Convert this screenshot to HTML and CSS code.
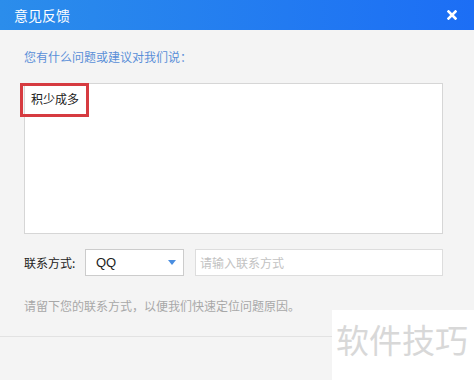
FILE: index.html
```html
<!DOCTYPE html>
<html lang="zh-CN">
<head>
    <meta charset="UTF-8">
    <title>意见反馈</title>
    <link rel="stylesheet" href="styles.css">
</head>
<body>
    <div class="dialog">
        <div class="dialog-header">
            <span class="dialog-title">意见反馈</span>
            <svg class="close-btn" width="10" height="10" viewBox="0 0 10 10">
                <path d="M1.5 1.5 L8.5 8.5 M8.5 1.5 L1.5 8.5" stroke="#ffffff" stroke-width="2.6" stroke-linecap="square"/>
            </svg>
        </div>

        <div class="dialog-body">
            <p class="prompt">您有什么问题或建议对我们说：</p>
            <div class="feedback-box">
                <div class="feedback-text">积少成多</div>
                <div class="highlight-mark"></div>
            </div>

            <div class="contact-row">
                <span class="contact-label">联系方式:</span>
                <div class="contact-select">
                    <span>QQ</span>
                    <span class="select-arrow"></span>
                </div>
                <div class="contact-input">请输入联系方式</div>
            </div>

            <p class="hint">请留下您的联系方式，以便我们快速定位问题原因。</p>
        </div>

        <div class="dialog-footer"></div>

        <div class="watermark">软件技巧</div>
    </div>
</body>
</html>
```

FILE: styles.css
```css
body {
    margin: 0;
    background-color: #f4f4f4;
    font-family: "Noto Sans CJK SC", "Noto Sans", sans-serif;
    color: #333333;
}

.dialog {
    width: 474px;
    height: 380px;
    position: relative;
    overflow: hidden;
}

/* Header bar */
.dialog-header {
    height: 30px;
    padding: 0 14px;
    display: flex;
    align-items: center;
    justify-content: space-between;
    background: linear-gradient(to right, #2b8deb, #1c6ef5);
    color: #ffffff;
}

.dialog-title {
    font-size: 14px;
    line-height: 16px;
}

.close-btn {
    margin-right: 3px;
}

/* Body */
.dialog-body {
    padding: 0 31px 0 24px;
}

.prompt {
    margin: 0;
    padding-top: 19px;
    font-size: 12px;
    line-height: 16px;
    color: #5a8fd8;
}

.feedback-box {
    position: relative;
    margin-top: 18px;
    height: 149px;
    background-color: #ffffff;
    border: 1px solid #d6d6d6;
}

.feedback-text {
    padding: 7px 6px;
    font-size: 12px;
    line-height: 16px;
    color: #222222;
}

/* red annotation round the typed text */
.highlight-mark {
    position: absolute;
    left: -5px;
    top: -1px;
    width: 63px;
    height: 28px;
    border: 3px solid #d63b40;
}

.contact-row {
    margin-top: 15px;
    display: flex;
    align-items: center;
    height: 27px;
}

.contact-label {
    font-size: 12px;
    width: 61px;
    color: #222222;
}

.contact-select {
    width: 82px;
    height: 25px;
    padding: 0 5px 0 10px;
    display: flex;
    align-items: center;
    justify-content: space-between;
    background-color: #ffffff;
    border: 1px solid #cccccc;
    font-size: 13px;
    font-family: "Liberation Sans", sans-serif;
    color: #222222;
}

.select-arrow {
    width: 0;
    height: 0;
    margin-right: 2px;
    border-left: 4px solid transparent;
    border-right: 4px solid transparent;
    border-top: 5px solid #4a8ee0;
}

.contact-input {
    flex: 1;
    height: 25px;
    margin-left: 11px;
    padding-left: 4px;
    display: flex;
    align-items: center;
    background-color: #ffffff;
    border: 1px solid #dddddd;
    font-size: 12px;
    color: #c2c2c2;
}

.hint {
    margin: 22px 0 0 0;
    font-size: 12px;
    line-height: 16px;
    color: #a8a8a8;
}

.dialog-footer {
    margin-top: 22px;
    border-top: 1px solid #e2e2e2;
}

.watermark {
    position: absolute;
    left: 332px;
    top: 310px;
    width: 142px;
    height: 70px;
    padding-left: 4px;
    box-sizing: border-box;
    background-color: #ffffff;
    font-size: 33px;
    line-height: 58px;
    color: #d8d8d8;
}
```
